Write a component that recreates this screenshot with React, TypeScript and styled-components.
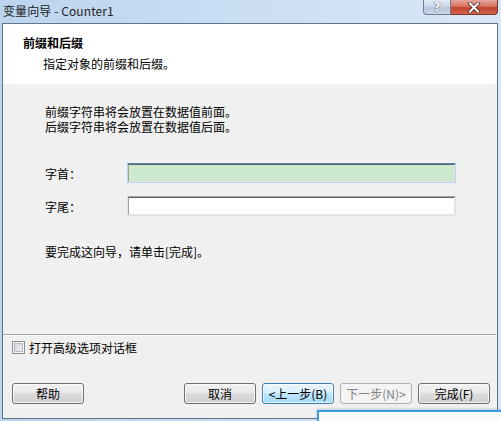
import styled, { createGlobalStyle } from "styled-components";

const GlobalStyle = createGlobalStyle`
  html, body {
    margin: 0;
    padding: 0;
  }
  body {
    font-family: "Noto Sans CJK SC", "Noto Sans", sans-serif;
    font-size: 12px;
    color: #000;
    background: #c4daf1;
  }
`;

const Window = styled.div`
  position: relative;
  width: 501px;
  height: 421px;
  overflow: hidden;
  display: flex;
  flex-direction: column;
  background: linear-gradient(90deg, #bcd4ee 0%, #c9ddf3 45%, #d9e8f7 100%);
`;

const TitleBar = styled.div`
  height: 23px;
  display: flex;
  align-items: flex-start;
  flex-shrink: 0;
`;

const TitleText = styled.div`
  padding-left: 3px;
  line-height: 22px;
  font-size: 12px;
  color: #1e1e1e;
  letter-spacing: 0.1px;
`;

const CaptionButtons = styled.div`
  margin-left: auto;
  margin-right: 3px;
  display: flex;
  height: 15px;
`;

const CaptionButton = styled.div<{ $close?: boolean }>`
  width: ${(p) => (p.$close ? 47 : 28)}px;
  height: 15px;
  box-sizing: border-box;
  border: 1px solid ${(p) => (p.$close ? "#79362c" : "#6c7d93")};
  border-top: none;
  border-left: ${(p) => (p.$close ? "none" : undefined)};
  border-radius: ${(p) => (p.$close ? "0 0 4px 0" : "0 0 0 4px")};
  background: ${(p) =>
    p.$close
      ? "linear-gradient(180deg, #e6a89d 0%, #d7735f 45%, #c0432f 55%, #d3634e 100%)"
      : "linear-gradient(180deg, #e5edf6 0%, #cbd8e8 45%, #b7c8dc 55%, #c7d6e8 100%)"};
  display: flex;
  align-items: center;
  justify-content: center;
  color: #fff;
  font-family: "DejaVu Sans", sans-serif;
  font-weight: 700;
  font-size: 12px;
  text-shadow: 0 0 1px #3a4a5e, 0 0 1px #3a4a5e;
`;

const Client = styled.div`
  margin-left: 2px;
  width: 496px;
  height: 396px;
  box-sizing: border-box;
  border: 1px solid #5f7389;
  display: flex;
  flex-direction: column;
  background: #f0f0f0;
`;

const Header = styled.div`
  height: 60px;
  flex-shrink: 0;
  background: #fff;
  box-sizing: border-box;
  padding: 11px 0 0 20px;
`;

const HeaderTitle = styled.div`
  font-weight: 700;
  line-height: 15px;
  font-size: 12px;
`;

const HeaderSub = styled.div`
  margin-top: 6px;
  padding-left: 20px;
  line-height: 15px;
`;

const Body = styled.div`
  flex: 1;
  box-sizing: border-box;
  padding: 20px 0 0 42px;
  display: flex;
  flex-direction: column;
`;

const Line = styled.div`
  line-height: 15px;
  white-space: nowrap;
`;

const Form = styled.div`
  margin-top: 29px;
  display: flex;
  flex-direction: column;
  gap: 13px;
`;

const FieldRow = styled.div`
  display: flex;
  align-items: center;
  height: 20px;
`;

const FieldLabel = styled.div`
  width: 82px;
  line-height: 15px;
`;

const Field = styled.div<{ $focused?: boolean }>`
  width: 329px;
  height: 20px;
  box-sizing: border-box;
  border: 1px solid ${(p) => (p.$focused ? "#b9d3ec" : "#e2e3ea")};
  border-top-color: ${(p) => (p.$focused ? "#4f83b6" : "#a4a4a4")};
  padding: 0;
`;

const FieldInner = styled.div<{ $focused?: boolean }>`
  height: 100%;
  box-sizing: border-box;
  border: 1px solid #e3e3e3;
  border-top-color: #646464;
  border-left-color: #a0a0a0;
  background: ${(p) => (p.$focused ? "#cce8cf" : "#ffffff")};
`;

const Finish = styled.div`
  margin-top: 28px;
  line-height: 15px;
`;

const Separator = styled.div`
  height: 1px;
  margin-right: 1px;
  background: #a0a0a0;
  border-bottom: 1px solid #fcfcfc;
  flex-shrink: 0;
`;

const Footer = styled.div`
  height: 82px;
  flex-shrink: 0;
  box-sizing: border-box;
  padding: 4px 7px 0 9px;
  display: flex;
  flex-direction: column;
`;

const CheckRow = styled.label`
  display: flex;
  align-items: center;
  gap: 4px;
  height: 15px;
  line-height: 15px;
`;

const CheckBox = styled.span`
  width: 13px;
  height: 13px;
  box-sizing: border-box;
  border: 1px solid #8e8f8f;
  background: #f4f4f4;
  box-shadow: inset 0 0 0 1px #f4f4f4, inset 0 0 0 2px #b9b9b9;
  background-image: linear-gradient(135deg, #cbcfd5 0%, #f4f4f4 100%);
`;

const ButtonBar = styled.div`
  margin-top: 28px;
  display: flex;
  gap: 6px;
`;

const Spacer = styled.div`
  flex: 1;
`;

type Variant = "normal" | "hot" | "disabled";

const Button = styled.div<{ $variant?: Variant }>`
  width: 72px;
  height: 21px;
  box-sizing: border-box;
  border: 1px solid
    ${(p) =>
      p.$variant === "hot" ? "#3c7fb1" : p.$variant === "disabled" ? "#adb2b5" : "#707070"};
  border-radius: 3px;
  background: ${(p) =>
    p.$variant === "hot"
      ? "linear-gradient(180deg, #eaf6fd 0%, #d9f0fc 45%, #bee6fd 50%, #a7d9f5 100%)"
      : p.$variant === "disabled"
      ? "#f4f4f4"
      : "linear-gradient(180deg, #f2f2f2 0%, #ebebeb 45%, #dddddd 50%, #cfcfcf 100%)"};
  box-shadow: inset 0 0 0 1px
    ${(p) => (p.$variant === "disabled" ? "#f4f4f4" : "rgba(255,255,255,0.7)")};
  color: ${(p) => (p.$variant === "disabled" ? "#838383" : "#000")};
  display: flex;
  align-items: center;
  justify-content: center;
  line-height: 15px;
  white-space: nowrap;
`;

const Popup = styled.div`
  position: absolute;
  left: 317px;
  top: 410px;
  width: 200px;
  height: 30px;
  box-sizing: border-box;
  border: 2px solid #3a9be6;
  background: #fafafa;
  box-shadow: 0 -1px 2px rgba(90, 110, 140, 0.35);
`;

function App() {
  return (
    <>
      <GlobalStyle />
      <Window>
        <TitleBar>
          <TitleText>变量向导 - Counter1</TitleText>
          <CaptionButtons>
            <CaptionButton>?</CaptionButton>
            <CaptionButton $close>
              <svg width="14" height="11" viewBox="0 0 14 11">
                <path
                  d="M3 1.5 L11 9.5 M11 1.5 L3 9.5"
                  stroke="#4a2a26"
                  strokeWidth="3.6"
                  strokeLinecap="square"
                />
                <path
                  d="M3 1.5 L11 9.5 M11 1.5 L3 9.5"
                  stroke="#ffffff"
                  strokeWidth="2"
                  strokeLinecap="square"
                />
              </svg>
            </CaptionButton>
          </CaptionButtons>
        </TitleBar>
        <Client>
          <Header>
            <HeaderTitle>前缀和后缀</HeaderTitle>
            <HeaderSub>指定对象的前缀和后缀。</HeaderSub>
          </Header>
          <Body>
            <Line>前缀字符串将会放置在数据值前面。</Line>
            <Line>后缀字符串将会放置在数据值后面。</Line>
            <Form>
              <FieldRow>
                <FieldLabel>字首：</FieldLabel>
                <Field $focused>
                  <FieldInner $focused />
                </Field>
              </FieldRow>
              <FieldRow>
                <FieldLabel>字尾：</FieldLabel>
                <Field>
                  <FieldInner />
                </Field>
              </FieldRow>
            </Form>
            <Finish>要完成这向导，请单击[完成]。</Finish>
          </Body>
          <Separator />
          <Footer>
            <CheckRow>
              <CheckBox />
              打开高级选项对话框
            </CheckRow>
            <ButtonBar>
              <Button>帮助</Button>
              <Spacer />
              <Button>取消</Button>
              <Button $variant="hot">&lt;上一步(B)</Button>
              <Button $variant="disabled">下一步(N)&gt;</Button>
              <Button>完成(F)</Button>
            </ButtonBar>
          </Footer>
        </Client>
        <Popup />
      </Window>
    </>
  );
}

export default App;
